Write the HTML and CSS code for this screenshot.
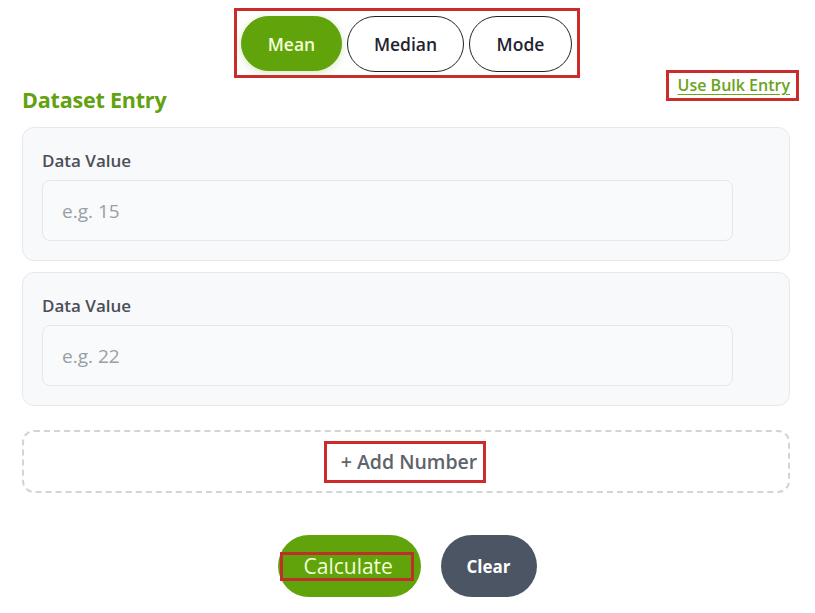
FILE: index.html
```html
<!DOCTYPE html>
<html>
<head>
  <meta charset="utf-8">
  <link rel="stylesheet" href="styles.css">
</head>
<body>
<div class="page">
  <!-- choix de la statistique -->
  <div class="modeBar">
    <div class="modeBox">
      <button class="pill active">Mean</button>
      <button class="pill median">Median</button>
      <button class="pill mode">Mode</button>
    </div>
  </div>

  <div class="headRow">
    <h2>Dataset Entry</h2>
    <a class="bulk" href="#">Use Bulk Entry</a>
  </div>

  <div class="card">
    <label>Data Value</label>
    <input type="text" placeholder="e.g. 15">
  </div>
  <div class="card">
    <label>Data Value</label>
    <input type="text" placeholder="e.g. 22">
  </div>

  <div class="addRow">
    <span class="addBox">+ Add Number</span>
  </div>

  <div class="actions">
    <button class="calc"><span class="calcBox">Calculate</span></button>
    <button class="clear">Clear</button>
  </div>
</div>
</body>
</html>
```

FILE: styles.css
```css
body {margin:0;background:#fff;font-family:"Open Sans","Noto Sans",sans-serif;color:#333;}
.page {width:768px;margin-left:22px;padding-top:8px;}
.modeBar {display:flex;justify-content:center;padding-left:2px;}
.modeBox {display:flex;gap:5px;border:3px solid #cc2b2b;padding:5px 5px 3px 4px;}
.pill {height:56px;border-radius:28px;border:1px solid #222;background:#fff;font-family:inherit;font-size:17.5px;font-weight:600;color:#1f2430;padding:0;}
.pill.median {width:117px;}
.pill.mode {width:103px;}
.pill.active {background:#61a30a;border-color:#61a30a;color:#f2ffd8;width:101px;height:55px;box-shadow:0 2px 8px rgba(97,163,10,0.25);}
.headRow {display:flex;justify-content:space-between;align-items:flex-end;height:44px;margin-top:-8px;margin-bottom:13px;}
h2 {margin:0;font-size:21.5px;font-weight:700;color:#62a10f;line-height:28px;letter-spacing:-0.2px;}
.bulk {align-self:flex-start;margin-right:-9px;border:3px solid #cc2b2b;padding:0 6px 0 9px;height:25px;line-height:25px;font-size:16px;font-weight:600;color:#6aa31c;text-decoration:underline;text-underline-offset:3px;}
.card {background:#f8f9fb;border:1px solid #e6e8ec;border-radius:12px;padding:21px 19px 19px 19px;margin-bottom:11px;}
.card label {display:block;font-size:17px;font-weight:600;color:#4a4f57;line-height:24px;margin-bottom:7px;}
.card input {display:block;box-sizing:border-box;width:691px;height:61px;border:1px solid #e5e7eb;border-radius:8px;background:#f9fafb;padding:0 19px;font-family:inherit;font-size:19px;color:#333;}
.card input::placeholder {color:#9a9ea6;}
.addRow {margin-top:24px;height:59px;border:2px dashed #d2d4d8;border-radius:12px;display:flex;justify-content:center;align-items:center;}
.addBox {border:3px solid #cc2b2b;padding:0 6px 0 14px;height:36px;line-height:36px;font-size:19.5px;font-weight:600;color:#5f636b;margin-left:-2px;}
.actions {display:flex;justify-content:center;gap:20px;margin-top:42px;padding-left:2px;}
.calc {width:143px;height:62px;border:none;border-radius:31px;background:#61a30a;padding:0 7px 0 2px;display:flex;align-items:center;}
.calcBox {display:block;border:3px solid #c0302a;padding:0 18px 0 21px;height:23px;line-height:23px;font-family:"Open Sans",sans-serif;font-size:21px;color:#f2ffd8;}
.clear {width:96px;height:62px;border:none;border-radius:31px;background:#4b5563;font-family:inherit;font-size:17px;font-weight:700;color:#fff;}
```
